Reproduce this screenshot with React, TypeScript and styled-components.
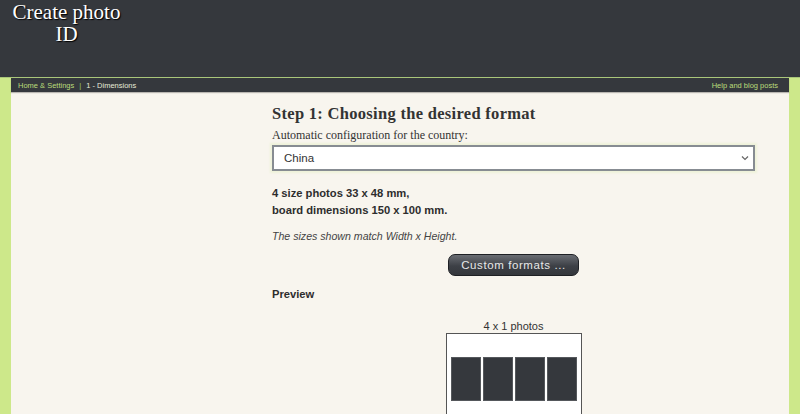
import React from 'react'
import styled, { createGlobalStyle } from 'styled-components'

const GlobalStyle = createGlobalStyle`
  html, body {
    margin: 0;
    padding: 0;
    background: #cde88a;
  }
  body {
    font-family: 'Liberation Sans', Arial, sans-serif;
  }
`

const Page = styled.div`
  width: 800px;
  min-height: 414px;
  background: #cde88a;
`

const Header = styled.header`
  height: 78px;
  box-sizing: border-box;
  background: #35383d;
  border-bottom: 1px solid #a9c67a;
`

const Title = styled.h1`
  margin: 0;
  width: 133px;
  padding-top: 1px;
  text-align: center;
  font-family: 'Liberation Serif', 'Times New Roman', serif;
  font-weight: normal;
  font-size: 21px;
  line-height: 22px;
  color: #ffffff;
  text-shadow: 1px 1px 1px #000000;
`

const Frame = styled.div`
  margin: 0 11px;
  background: #f8f5ee;
  min-height: 336px;
`

const NavBar = styled.nav`
  height: 14px;
  background: #35383d;
  display: flex;
  align-items: center;
  justify-content: space-between;
  padding: 0 11px 0 7px;
  font-family: 'Liberation Sans', Arial, sans-serif;
  font-size: 7.5px;
  box-shadow: 0 1px 1px rgba(0, 0, 0, 0.25);
`

const Crumbs = styled.div`
  display: flex;
  gap: 5px;
`

const NavLink = styled.span<{ $active?: boolean }>`
  color: ${(p) => (p.$active ? '#e6ead8' : '#b9dc7a')};
`

const Sep = styled.span`
  color: #9cc760;
`

const Layout = styled.div`
  display: grid;
  grid-template-columns: 261px 483px;
`

const Main = styled.main`
  padding-top: 13px;
  color: #333333;
`

const Heading = styled.h2`
  margin: 0;
  font-family: 'Liberation Serif', Georgia, serif;
  font-size: 16.5px;
  letter-spacing: 0.3px;
  line-height: 18px;
  font-weight: bold;
  color: #333333;
`

const Label = styled.div`
  margin-top: 5px;
  font-family: 'Liberation Serif', Georgia, serif;
  font-size: 12px;
  line-height: 14px;
  color: #333333;
`

const Select = styled.div`
  margin-top: 3px;
  height: 26px;
  box-sizing: border-box;
  border: 2px solid #878c92;
  background: #ffffff;
  box-shadow: 0 0 2px 2px #eef2d9;
  display: flex;
  align-items: center;
  justify-content: space-between;
  padding: 0 4px 0 10px;
  font-size: 11.5px;
  color: #333333;
`

const Chevron = styled.svg`
  width: 8px;
  height: 6px;
`

const Info = styled.p`
  margin: 14px 0 0;
  font-weight: bold;
  font-size: 11.2px;
  line-height: 17px;
  color: #2d2d2d;
`

const Note = styled.p`
  margin: 10px 0 0;
  font-style: italic;
  font-size: 10.6px;
  line-height: 14px;
  color: #444444;
`

const ButtonRow = styled.div`
  display: flex;
  justify-content: center;
  margin-top: 11px;
`

const Button = styled.button`
  width: 131px;
  height: 22px;
  border-radius: 7px;
  border: 1px solid #1e2024;
  background: linear-gradient(#6a6d73, #3d4046 55%, #34373c);
  color: #e8e8e8;
  font-family: 'Liberation Sans', Arial, sans-serif;
  font-size: 11.5px;
  letter-spacing: 0.6px;
  padding: 0;
`

const SubHeading = styled.div`
  margin-top: 12px;
  font-weight: bold;
  font-size: 11.2px;
  color: #2d2d2d;
`

const Preview = styled.figure`
  margin: 20px 0 0;
  display: flex;
  flex-direction: column;
  align-items: center;
`

const Caption = styled.figcaption`
  font-size: 11px;
  line-height: 13px;
  color: #333333;
`

const Board = styled.div`
  width: 136px;
  height: 90px;
  box-sizing: border-box;
  border: 1px solid #555555;
  border-bottom: none;
  background: #ffffff;
  display: flex;
  gap: 2px;
  padding: 23px 3px 0 4px;
`

const Photo = styled.div`
  width: 30px;
  height: 44px;
  background: #35383d;
  border: 1px solid #55585c;
  box-sizing: border-box;
`

export default function App() {
  return (
    <Page>
      <GlobalStyle />
      <Header>
        <Title>Create photo ID</Title>
      </Header>
      <Frame>
        <NavBar>
          <Crumbs>
            <NavLink>Home &amp; Settings</NavLink>
            <Sep>|</Sep>
            <NavLink $active>1 - Dimensions</NavLink>
          </Crumbs>
          <NavLink>Help and blog posts</NavLink>
        </NavBar>
        <Layout>
          <div />
          <Main>
            <Heading>Step 1: Choosing the desired format</Heading>
            <Label>Automatic configuration for the country:</Label>
            <Select>
              <span>China</span>
              <Chevron viewBox="0 0 8 6">
                <path d="M1 1.5 L4 4.5 L7 1.5" fill="none" stroke="#666" strokeWidth="1.2" />
              </Chevron>
            </Select>
            <Info>
              4 size photos 33 x 48 mm,
              <br />
              board dimensions 150 x 100 mm.
            </Info>
            <Note>The sizes shown match Width x Height.</Note>
            <ButtonRow>
              <Button>Custom formats ...</Button>
            </ButtonRow>
            <SubHeading>Preview</SubHeading>
            <Preview>
              <Caption>4 x 1 photos</Caption>
              <Board>
                {[0, 1, 2, 3].map((i) => (
                  <Photo key={i} />
                ))}
              </Board>
            </Preview>
          </Main>
        </Layout>
      </Frame>
    </Page>
  )
}
